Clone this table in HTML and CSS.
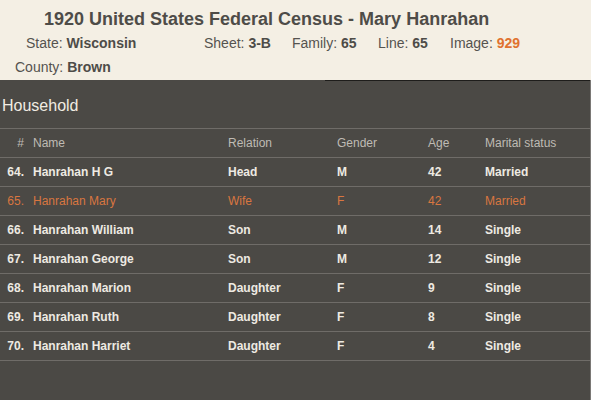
FILE: index.html
```html
<!DOCTYPE html>
<html lang="en">
<head>
  <meta charset="UTF-8">
  <title>1920 United States Federal Census - Mary Hanrahan</title>
  <link rel="stylesheet" href="styles.css">
</head>
<body>
  <!-- record header -->
  <header class="record">
    <h1 class="record-title">1920 United States Federal Census - Mary Hanrahan</h1>
    <div class="record-info">
      <span class="info-item">State: <b>Wisconsin</b></span>
      <span class="info-item">Sheet: <b>3-B</b></span>
      <span class="info-item">Family: <b>65</b></span>
      <span class="info-item">Line: <b>65</b></span>
      <span class="info-item">Image: <b class="accent">929</b></span>
    </div>
    <div class="record-county">County: <b>Brown</b></div>
  </header>

  <!-- household list -->
  <section class="household">
    <h2 class="household-title">Household</h2>
    <div class="people">
      <div class="row head">
        <span class="num">#</span><span>Name</span><span>Relation</span><span>Gender</span><span>Age</span><span>Marital status</span>
      </div>
      <div class="row">
        <span class="num">64.</span><span>Hanrahan H G</span><span>Head</span><span>M</span><span>42</span><span>Married</span>
      </div>
      <div class="row current">
        <span class="num">65.</span><span>Hanrahan Mary</span><span>Wife</span><span>F</span><span>42</span><span>Married</span>
      </div>
      <div class="row">
        <span class="num">66.</span><span>Hanrahan William</span><span>Son</span><span>M</span><span>14</span><span>Single</span>
      </div>
      <div class="row">
        <span class="num">67.</span><span>Hanrahan George</span><span>Son</span><span>M</span><span>12</span><span>Single</span>
      </div>
      <div class="row">
        <span class="num">68.</span><span>Hanrahan Marion</span><span>Daughter</span><span>F</span><span>9</span><span>Single</span>
      </div>
      <div class="row">
        <span class="num">69.</span><span>Hanrahan Ruth</span><span>Daughter</span><span>F</span><span>8</span><span>Single</span>
      </div>
      <div class="row">
        <span class="num">70.</span><span>Hanrahan Harriet</span><span>Daughter</span><span>F</span><span>4</span><span>Single</span>
      </div>
    </div>
  </section>
</body>
</html>
```

FILE: styles.css
```css
/* page base */
html, body { margin: 0; padding: 0; height: 100%; }
body { font-family: "Liberation Sans", Arial, sans-serif; background: #4b4945; display: flex; flex-direction: column; }

/* record header */
.record { background: #f4efe4; color: #55534f; height: 80px; box-sizing: border-box; padding-top: 8px; }
.record b { color: #4e4c48; }
.record-title { margin: 0 0 0 44px; font-size: 18px; line-height: 22px; color: #4e4c48; }
.record-info { display: grid; grid-template-columns: 178px 88px 86px 72px auto; padding-left: 26px; margin-top: 3px; font-size: 14px; line-height: 20px; }
.record-county { padding-left: 15px; margin-top: 4px; font-size: 14px; line-height: 20px; }
.accent { color: #e0722f !important; }

/* household */
.household { flex: 1; width: 590px; border-right: 1px solid #7a7875; background: linear-gradient(#1e1d1b, #1e1d1b) no-repeat 325px 0 / 265px 1px; }
.household-title { margin: 0; padding: 16px 0 0 2px; height: 32px; font-size: 16px; line-height: 20px; font-weight: normal; color: #f1ece2; }
.people { border-bottom: 1px solid #6f6c68; }
.row { display: grid; grid-template-columns: 24px 195px 109px 91px 57px 1fr; height: 28px; border-top: 1px solid #6f6c68; align-items: center; font-size: 12px; font-weight: bold; color: #eeeae2; }
.row span { padding-left: 9px; }
.row .num { padding-left: 0; text-align: right; }
.row.head { font-weight: normal; color: #bfbbb4; }
.row.current { color: #d97640; font-weight: normal; }
```
